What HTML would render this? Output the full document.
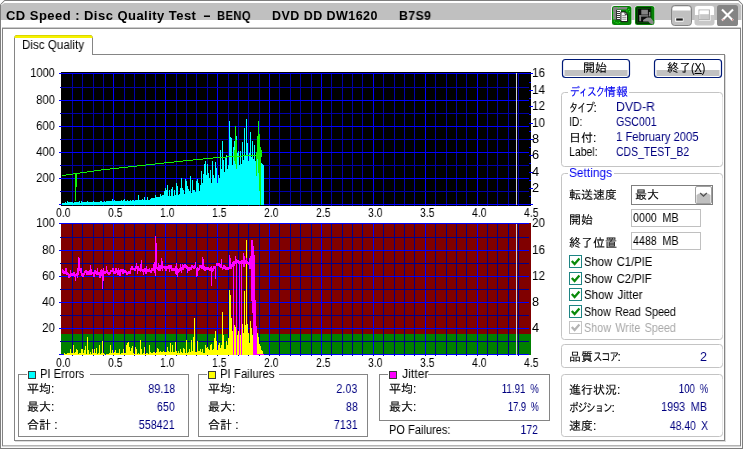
<!DOCTYPE html>
<html lang="ja"><head><meta charset="utf-8"><title>CD Speed : Disc Quality Test</title>
<style>
html,body{margin:0;padding:0;background:#fff;}
body{width:743px;height:449px;overflow:hidden;position:relative;font-family:"Liberation Sans","IPAGothic",sans-serif;color:#000;}
svg{position:absolute;left:0;top:0;}
.t{position:absolute;white-space:pre;line-height:16px;height:16px;will-change:transform;}
.j{position:absolute;white-space:pre;font-size:12px;line-height:14px;height:14px;will-change:transform;-webkit-text-stroke:0.12px;}
.kw{display:inline-block;height:14px;vertical-align:top;}
.ks{display:inline-block;transform-origin:0 0;}
</style></head>
<body>
<svg width="743" height="449" viewBox="0 0 743 449">
<g><path d="M0 449 V4.5 L4.5 0 H738.5 L743 4.5 V449 Z" fill="#7e7e7e"/>
<path d="M1 448 V5 L5 1 H738 L742 5 V448 Z" fill="#fafafa"/>
<path d="M1 20 V5 L5 1 H738 L742 5 V20 Z" fill="#ffffff"/>
<path d="M1 20 V5.2 L4.4 3 H738.4 L741.4 5.4 V20 Z" fill="#c0c0c0"/>
<rect x="1" y="20" width="741" height="8" fill="#ffffff"/>
<rect x="2" y="27" width="739" height="1" fill="#d4d4d4"/>
<rect x="2" y="27.9" width="739" height="418.4" fill="#838383"/>
<rect x="3" y="28.9" width="737" height="416.5" fill="#ffffff"/></g>
<g shape-rendering="crispEdges">
<rect x="14" y="54" width="711" height="387" fill="#858585"/>
<rect x="15" y="55" width="709" height="385" fill="#ffffff"/>
<rect x="725" y="55" width="1" height="387" fill="#dcdcdc"/>
<rect x="15" y="441" width="711" height="1" fill="#dcdcdc"/>
<rect x="61" y="72" width="470" height="134" fill="#000000"/>
<rect x="61" y="223" width="470" height="132" fill="#800000"/>
<rect x="61" y="334" width="470" height="21" fill="#008000"/>
<rect x="72" y="73" width="1" height="132" fill="#0000a8"/>
<rect x="82" y="73" width="1" height="132" fill="#0000a8"/>
<rect x="93" y="73" width="1" height="132" fill="#0000a8"/>
<rect x="103" y="73" width="1" height="132" fill="#0000a8"/>
<rect x="113" y="73" width="1" height="132" fill="#0000ff"/>
<rect x="124" y="73" width="1" height="132" fill="#0000a8"/>
<rect x="134" y="73" width="1" height="132" fill="#0000a8"/>
<rect x="145" y="73" width="1" height="132" fill="#0000a8"/>
<rect x="155" y="73" width="1" height="132" fill="#0000a8"/>
<rect x="165" y="73" width="1" height="132" fill="#0000ff"/>
<rect x="176" y="73" width="1" height="132" fill="#0000a8"/>
<rect x="186" y="73" width="1" height="132" fill="#0000a8"/>
<rect x="196" y="73" width="1" height="132" fill="#0000a8"/>
<rect x="207" y="73" width="1" height="132" fill="#0000a8"/>
<rect x="217" y="73" width="1" height="132" fill="#0000ff"/>
<rect x="228" y="73" width="1" height="132" fill="#0000a8"/>
<rect x="238" y="73" width="1" height="132" fill="#0000a8"/>
<rect x="248" y="73" width="1" height="132" fill="#0000a8"/>
<rect x="259" y="73" width="1" height="132" fill="#0000a8"/>
<rect x="269" y="73" width="1" height="132" fill="#0000ff"/>
<rect x="279" y="73" width="1" height="132" fill="#0000a8"/>
<rect x="290" y="73" width="1" height="132" fill="#0000a8"/>
<rect x="300" y="73" width="1" height="132" fill="#0000a8"/>
<rect x="311" y="73" width="1" height="132" fill="#0000a8"/>
<rect x="321" y="73" width="1" height="132" fill="#0000ff"/>
<rect x="331" y="73" width="1" height="132" fill="#0000a8"/>
<rect x="342" y="73" width="1" height="132" fill="#0000a8"/>
<rect x="352" y="73" width="1" height="132" fill="#0000a8"/>
<rect x="362" y="73" width="1" height="132" fill="#0000a8"/>
<rect x="373" y="73" width="1" height="132" fill="#0000ff"/>
<rect x="383" y="73" width="1" height="132" fill="#0000a8"/>
<rect x="394" y="73" width="1" height="132" fill="#0000a8"/>
<rect x="404" y="73" width="1" height="132" fill="#0000a8"/>
<rect x="414" y="73" width="1" height="132" fill="#0000a8"/>
<rect x="425" y="73" width="1" height="132" fill="#0000ff"/>
<rect x="435" y="73" width="1" height="132" fill="#0000a8"/>
<rect x="446" y="73" width="1" height="132" fill="#0000a8"/>
<rect x="456" y="73" width="1" height="132" fill="#0000a8"/>
<rect x="466" y="73" width="1" height="132" fill="#0000a8"/>
<rect x="477" y="73" width="1" height="132" fill="#0000ff"/>
<rect x="487" y="73" width="1" height="132" fill="#0000a8"/>
<rect x="497" y="73" width="1" height="132" fill="#0000a8"/>
<rect x="508" y="73" width="1" height="132" fill="#0000a8"/>
<rect x="518" y="73" width="1" height="132" fill="#0000a8"/>
<rect x="59" y="73" width="470" height="1" fill="#0000ff"/>
<rect x="60" y="87" width="469" height="1" fill="#0000a8"/>
<rect x="59" y="100" width="470" height="1" fill="#0000ff"/>
<rect x="60" y="113" width="469" height="1" fill="#0000a8"/>
<rect x="59" y="126" width="470" height="1" fill="#0000ff"/>
<rect x="60" y="139" width="469" height="1" fill="#0000a8"/>
<rect x="59" y="152" width="470" height="1" fill="#0000ff"/>
<rect x="60" y="165" width="469" height="1" fill="#0000a8"/>
<rect x="59" y="178" width="470" height="1" fill="#0000ff"/>
<rect x="60" y="191" width="469" height="1" fill="#0000a8"/>
<rect x="59" y="204" width="470" height="1" fill="#0000ff"/>
<path d="M62 205V203h1V203h1V203h1V202h1V203h1V201h1V202h1V202h1V202h1V202h1V202h1V203h1V202h1V202h1V202h1V202h1V202h1V201h1V203h1V201h1V202h1V202h1V202h1V202h1V202h1V201h1V202h1V202h1V202h1V202h1V202h1V201h1V202h1V202h1V202h1V202h1V202h1V202h1V201h1V201h1V202h1V202h1V201h1V202h1V201h1V201h1V201h1V201h1V201h1V201h1V199h1V201h1V200h1V201h1V201h1V201h1V201h1V201h1V201h1V200h1V201h1V200h1V199h1V201h1V201h1V200h1V201h1V201h1V200h1V201h1V200h1V200h1V201h1V200h1V200h1V200h1V195h1V200h1V200h1V200h1V199h1V200h1V197h1V200h1V200h1V197h1V200h1V200h1V199h1V198h1V198h1V198h1V198h1V195h1V197h1V197h1V197h1V197h1V194h1V196h1V195h1V195h1V191h1V188h1V190h1V185h1V196h1V190h1V196h1V189h1V187h1V196h1V190h1V195h1V183h1V186h1V195h1V194h1V188h1V178h1V188h1V190h1V194h1V179h1V181h1V186h1V189h1V191h1V176h1V193h1V180h1V190h1V190h1V192h1V181h1V179h1V183h1V191h1V185h1V171h1V183h1V174h1V164h1V161h1V175h1V164h1V173h1V178h1V170h1V183h1V161h1V175h1V178h1V162h1V168h1V183h1V175h1V178h1V150h1V169h1V141h1V160h1V172h1V157h1V155h1V169h1V165h1V121h1V137h1V138h1V165h1V147h1V141h1V155h1V136h1V153h1V151h1V165h1V151h1V164h1V142h1V160h1V128h1V155h1V119h1V143h1V161h1V153h1V132h1V157h1V141h1V159h1V145h1V161h1V153h1V157h1V149h1V161h1V164h1V163h1V164h1V165h1V205Z" fill="#00ffff"/>
<path d="M62 175h1v1h-1zM63 175h1v1h-1zM64 175h1v1h-1zM65 175h1v1h-1zM66 174h1v1h-1zM67 174h1v1h-1zM68 174h1v1h-1zM69 174h1v1h-1zM70 174h1v1h-1zM71 174h1v1h-1zM72 174h1v1h-1zM73 173h1v1h-1zM74 173h1v1h-1zM75 173h1v1h-1zM76 173h1v1h-1zM77 173h1v1h-1zM78 173h1v1h-1zM79 173h1v1h-1zM80 172h1v1h-1zM81 172h1v1h-1zM82 172h1v1h-1zM83 172h1v1h-1zM84 172h1v1h-1zM85 172h1v1h-1zM86 172h1v1h-1zM87 171h1v1h-1zM88 171h1v1h-1zM89 171h1v1h-1zM90 171h1v1h-1zM91 171h1v1h-1zM92 171h1v1h-1zM93 171h1v1h-1zM94 170h1v1h-1zM95 170h1v1h-1zM96 170h1v1h-1zM97 170h1v1h-1zM98 170h1v1h-1zM99 170h1v1h-1zM100 170h1v1h-1zM101 169h1v1h-1zM102 169h1v1h-1zM103 169h1v1h-1zM104 169h1v1h-1zM105 169h1v1h-1zM106 169h1v1h-1zM107 169h1v1h-1zM108 169h1v1h-1zM109 169h1v1h-1zM110 168h1v1h-1zM111 168h1v1h-1zM112 168h1v1h-1zM113 168h1v1h-1zM114 168h1v1h-1zM115 168h1v1h-1zM116 168h1v1h-1zM117 168h1v1h-1zM118 168h1v1h-1zM119 167h1v1h-1zM120 167h1v1h-1zM121 167h1v1h-1zM122 167h1v1h-1zM123 167h1v1h-1zM124 167h1v1h-1zM125 167h1v1h-1zM126 167h1v1h-1zM127 167h1v1h-1zM128 166h1v1h-1zM129 166h1v1h-1zM130 166h1v1h-1zM131 166h1v1h-1zM132 166h1v1h-1zM133 166h1v1h-1zM134 166h1v1h-1zM135 166h1v1h-1zM136 166h1v1h-1zM137 165h1v1h-1zM138 165h1v1h-1zM139 165h1v1h-1zM140 165h1v1h-1zM141 165h1v1h-1zM142 165h1v1h-1zM143 165h1v1h-1zM144 165h1v1h-1zM145 165h1v1h-1zM146 164h1v1h-1zM147 164h1v1h-1zM148 164h1v1h-1zM149 164h1v1h-1zM150 164h1v1h-1zM151 164h1v1h-1zM152 164h1v1h-1zM153 164h1v1h-1zM154 164h1v1h-1zM155 163h1v1h-1zM156 163h1v1h-1zM157 163h1v1h-1zM158 163h1v1h-1zM159 163h1v1h-1zM160 163h1v1h-1zM161 163h1v1h-1zM162 163h1v1h-1zM163 163h1v1h-1zM164 162h1v1h-1zM165 162h1v1h-1zM166 162h1v1h-1zM167 162h1v1h-1zM168 162h1v1h-1zM169 162h1v1h-1zM170 162h1v1h-1zM171 162h1v1h-1zM172 162h1v1h-1zM173 162h1v1h-1zM174 161h1v1h-1zM175 161h1v1h-1zM176 161h1v1h-1zM177 161h1v1h-1zM178 161h1v1h-1zM179 161h1v1h-1zM180 161h1v1h-1zM181 161h1v1h-1zM182 161h1v1h-1zM183 160h1v1h-1zM184 160h1v1h-1zM185 160h1v1h-1zM186 160h1v1h-1zM187 160h1v1h-1zM188 160h1v1h-1zM189 160h1v1h-1zM190 160h1v1h-1zM191 160h1v1h-1zM192 160h1v1h-1zM193 159h1v1h-1zM194 159h1v1h-1zM195 159h1v1h-1zM196 159h1v1h-1zM197 159h1v1h-1zM198 159h1v1h-1zM199 159h1v1h-1zM200 159h1v1h-1zM201 159h1v1h-1zM202 159h1v1h-1zM203 158h1v1h-1zM204 158h1v1h-1zM205 158h1v1h-1zM206 158h1v1h-1zM207 158h1v1h-1zM208 158h1v1h-1zM209 158h1v1h-1zM210 158h1v1h-1zM211 158h1v1h-1zM212 158h1v1h-1zM213 157h1v1h-1zM214 157h1v1h-1zM215 157h1v1h-1zM216 157h1v1h-1zM217 157h1v1h-1zM218 157h1v1h-1zM219 157h1v1h-1zM220 157h1v1h-1zM221 157h1v1h-1zM222 157h1v1h-1zM223 157h1v1h-1zM224 157h1v1h-1zM225 157h1v1h-1zM226 157h1v1h-1zM227 156h1v1h-1zM228 156h1v1h-1zM229 156h1v1h-1zM230 156h1v1h-1zM231 156h1v1h-1zM232 156h1v1h-1zM233 156h1v1h-1zM234 156h1v1h-1zM235 156h1v1h-1zM236 156h1v1h-1zM237 156h1v1h-1zM238 156h1v1h-1zM239 156h1v1h-1zM240 156h1v1h-1zM241 156h1v1h-1zM242 155h1v1h-1zM243 155h1v1h-1zM244 155h1v1h-1zM245 155h1v1h-1zM246 155h1v1h-1zM247 155h1v1h-1zM248 155h1v1h-1zM249 155h1v1h-1zM250 155h1v1h-1zM251 155h1v1h-1zM252 155h1v1h-1zM253 155h1v1h-1zM254 155h1v1h-1zM255 155h1v1h-1zM256 155h1v1h-1zM257 154h1v1h-1z" fill="#12f40a"/>
<rect x="75" y="173" width="1" height="28" fill="#12f40a"/>
<rect x="76" y="173" width="1" height="14" fill="#12f40a"/>
<rect x="235" y="126" width="1" height="38" fill="#12f40a"/>
<rect x="236" y="140" width="1" height="29" fill="#12f40a"/>
<rect x="234" y="150" width="1" height="11" fill="#12f40a"/>
<rect x="257" y="136" width="1" height="23" fill="#12f40a"/>
<rect x="258" y="121" width="1" height="52" fill="#12f40a"/>
<rect x="259" y="134" width="1" height="57" fill="#12f40a"/>
<rect x="260" y="147" width="1" height="58" fill="#12f40a"/>
<rect x="256" y="152" width="1" height="24" fill="#12f40a"/>
<rect x="261" y="150" width="1" height="7" fill="#12f40a"/>
<rect x="516" y="73" width="1" height="132" fill="#d0d0d0"/>
<rect x="72" y="223" width="1" height="132" fill="#00008c"/>
<rect x="82" y="223" width="1" height="132" fill="#00008c"/>
<rect x="93" y="223" width="1" height="132" fill="#00008c"/>
<rect x="103" y="223" width="1" height="132" fill="#00008c"/>
<rect x="113" y="223" width="1" height="132" fill="#0000ff"/>
<rect x="124" y="223" width="1" height="132" fill="#00008c"/>
<rect x="134" y="223" width="1" height="132" fill="#00008c"/>
<rect x="145" y="223" width="1" height="132" fill="#00008c"/>
<rect x="155" y="223" width="1" height="132" fill="#00008c"/>
<rect x="165" y="223" width="1" height="132" fill="#0000ff"/>
<rect x="176" y="223" width="1" height="132" fill="#00008c"/>
<rect x="186" y="223" width="1" height="132" fill="#00008c"/>
<rect x="196" y="223" width="1" height="132" fill="#00008c"/>
<rect x="207" y="223" width="1" height="132" fill="#00008c"/>
<rect x="217" y="223" width="1" height="132" fill="#0000ff"/>
<rect x="228" y="223" width="1" height="132" fill="#00008c"/>
<rect x="238" y="223" width="1" height="132" fill="#00008c"/>
<rect x="248" y="223" width="1" height="132" fill="#00008c"/>
<rect x="259" y="223" width="1" height="132" fill="#00008c"/>
<rect x="269" y="223" width="1" height="132" fill="#0000ff"/>
<rect x="279" y="223" width="1" height="132" fill="#00008c"/>
<rect x="290" y="223" width="1" height="132" fill="#00008c"/>
<rect x="300" y="223" width="1" height="132" fill="#00008c"/>
<rect x="311" y="223" width="1" height="132" fill="#00008c"/>
<rect x="321" y="223" width="1" height="132" fill="#0000ff"/>
<rect x="331" y="223" width="1" height="132" fill="#00008c"/>
<rect x="342" y="223" width="1" height="132" fill="#00008c"/>
<rect x="352" y="223" width="1" height="132" fill="#00008c"/>
<rect x="362" y="223" width="1" height="132" fill="#00008c"/>
<rect x="373" y="223" width="1" height="132" fill="#0000ff"/>
<rect x="383" y="223" width="1" height="132" fill="#00008c"/>
<rect x="394" y="223" width="1" height="132" fill="#00008c"/>
<rect x="404" y="223" width="1" height="132" fill="#00008c"/>
<rect x="414" y="223" width="1" height="132" fill="#00008c"/>
<rect x="425" y="223" width="1" height="132" fill="#0000ff"/>
<rect x="435" y="223" width="1" height="132" fill="#00008c"/>
<rect x="446" y="223" width="1" height="132" fill="#00008c"/>
<rect x="456" y="223" width="1" height="132" fill="#00008c"/>
<rect x="466" y="223" width="1" height="132" fill="#00008c"/>
<rect x="477" y="223" width="1" height="132" fill="#0000ff"/>
<rect x="487" y="223" width="1" height="132" fill="#00008c"/>
<rect x="497" y="223" width="1" height="132" fill="#00008c"/>
<rect x="508" y="223" width="1" height="132" fill="#00008c"/>
<rect x="518" y="223" width="1" height="132" fill="#00008c"/>
<rect x="59" y="223" width="470" height="1" fill="#0000ff"/>
<rect x="60" y="237" width="469" height="1" fill="#00008c"/>
<rect x="59" y="250" width="470" height="1" fill="#0000ff"/>
<rect x="60" y="263" width="469" height="1" fill="#00008c"/>
<rect x="59" y="276" width="470" height="1" fill="#0000ff"/>
<rect x="60" y="289" width="469" height="1" fill="#00008c"/>
<rect x="59" y="302" width="470" height="1" fill="#0000ff"/>
<rect x="60" y="315" width="469" height="1" fill="#00008c"/>
<rect x="59" y="328" width="470" height="1" fill="#0000ff"/>
<rect x="60" y="341" width="469" height="1" fill="#00008c"/>
<rect x="59" y="354" width="470" height="1" fill="#0000ff"/>
<path d="M64 355V353h1V354h1V354h1V353h1V353h1V353h1V349h1V353h1V353h1V345h1V353h1V352h1V349h1V350h1V354h1V353h1V353h1V349h1V349h1V353h1V350h1V346h1V354h1V337h1V350h1V354h1V352h1V354h1V349h1V353h1V349h1V353h1V348h1V354h1V353h1V345h1V354h1V353h1V341h1V353h1V354h1V355h1V354h1V354h1V354h1V353h1V345h1V353h1V350h1V353h1V352h1V350h1V353h1V353h1V353h1V349h1V354h1V353h1V353h1V349h1V353h1V353h1V345h1V343h1V342h1V347h1V351h1V348h1V346h1V353h1V354h1V347h1V349h1V354h1V353h1V354h1V340h1V349h1V354h1V353h1V347h1V354h1V353h1V353h1V354h1V345h1V352h1V353h1V353h1V352h1V352h1V353h1V352h1V348h1V349h1V352h1V351h1V352h1V352h1V351h1V352h1V352h1V352h1V347h1V351h1V352h1V343h1V352h1V345h1V352h1V352h1V342h1V351h1V353h1V351h1V353h1V349h1V352h1V353h1V348h1V349h1V353h1V340h1V353h1V352h1V349h1V352h1V340h1V351h1V337h1V318h1V352h1V352h1V341h1V351h1V351h1V349h1V352h1V349h1V353h1V353h1V345h1V348h1V347h1V349h1V350h1V345h1V344h1V350h1V349h1V338h1V331h1V341h1V350h1V345h1V343h1V348h1V345h1V312h1V335h1V349h1V349h1V341h1V345h1V338h1V290h1V295h1V318h1V331h1V345h1V325h1V327h1V339h1V335h1V331h1V341h1V335h1V344h1V324h1V333h1V291h1V325h1V240h1V324h1V333h1V343h1V321h1V328h1V335h1V341h1V344h1V340h1V336h1V333h1V337h1V344h1V346h1V350h1V351h1V354h1V355Z" fill="#ffff00"/>
<path d="M62 269h1v4h-1zM63 270h1v4h-1zM64 271h1v3h-1zM65 268h1v6h-1zM66 268h1v7h-1zM67 272h1v3h-1zM68 273h1v5h-1zM69 274h1v4h-1zM70 270h1v7h-1zM71 273h1v3h-1zM72 273h1v3h-1zM73 272h1v4h-1zM74 272h1v5h-1zM75 274h1v7h-1zM76 273h1v3h-1zM77 268h1v10h-1zM78 257h1v18h-1zM79 258h1v13h-1zM80 268h1v5h-1zM81 268h1v8h-1zM82 273h1v4h-1zM83 273h1v4h-1zM84 271h1v4h-1zM85 270h1v3h-1zM86 270h1v5h-1zM87 271h1v4h-1zM88 271h1v4h-1zM89 270h1v5h-1zM90 265h1v10h-1zM91 269h1v6h-1zM92 272h1v2h-1zM93 272h1v5h-1zM94 270h1v7h-1zM95 270h1v4h-1zM96 271h1v4h-1zM97 268h1v7h-1zM98 272h1v3h-1zM99 272h1v6h-1zM100 270h1v8h-1zM101 269h1v7h-1zM102 270h1v19h-1zM103 268h1v13h-1zM104 271h1v3h-1zM105 271h1v3h-1zM106 266h1v7h-1zM107 270h1v4h-1zM108 272h1v3h-1zM109 272h1v3h-1zM110 270h1v4h-1zM111 270h1v2h-1zM112 268h1v4h-1zM113 268h1v6h-1zM114 271h1v3h-1zM115 268h1v6h-1zM116 268h1v5h-1zM117 270h1v5h-1zM118 268h1v7h-1zM119 270h1v6h-1zM120 269h1v7h-1zM121 269h1v3h-1zM122 269h1v5h-1zM123 269h1v5h-1zM124 270h1v3h-1zM125 270h1v3h-1zM126 271h1v4h-1zM127 272h1v3h-1zM128 271h1v3h-1zM129 271h1v3h-1zM130 268h1v6h-1zM131 266h1v4h-1zM132 266h1v4h-1zM133 268h1v2h-1zM134 268h1v3h-1zM135 266h1v5h-1zM136 263h1v6h-1zM137 266h1v8h-1zM138 266h1v5h-1zM139 268h1v3h-1zM140 264h1v8h-1zM141 260h1v11h-1zM142 269h1v3h-1zM143 269h1v6h-1zM144 268h1v4h-1zM145 268h1v6h-1zM146 266h1v8h-1zM147 269h1v3h-1zM148 269h1v3h-1zM149 268h1v4h-1zM150 270h1v3h-1zM151 268h1v5h-1zM152 268h1v3h-1zM153 264h1v7h-1zM154 262h1v11h-1zM155 236h1v40h-1zM156 243h1v26h-1zM157 267h1v3h-1zM158 263h1v8h-1zM159 265h1v6h-1zM160 265h1v6h-1zM161 258h1v11h-1zM162 261h1v10h-1zM163 266h1v2h-1zM164 266h1v3h-1zM165 266h1v5h-1zM166 266h1v5h-1zM167 266h1v3h-1zM168 265h1v4h-1zM169 265h1v7h-1zM170 265h1v4h-1zM171 265h1v6h-1zM172 268h1v3h-1zM173 268h1v3h-1zM174 268h1v3h-1zM175 266h1v8h-1zM176 263h1v12h-1zM177 268h1v9h-1zM178 269h1v4h-1zM179 268h1v4h-1zM180 264h1v7h-1zM181 267h1v6h-1zM182 264h1v6h-1zM183 265h1v5h-1zM184 264h1v4h-1zM185 264h1v4h-1zM186 265h1v4h-1zM187 266h1v7h-1zM188 267h1v4h-1zM189 267h1v4h-1zM190 267h1v3h-1zM191 265h1v5h-1zM192 265h1v3h-1zM193 266h1v3h-1zM194 265h1v4h-1zM195 262h1v6h-1zM196 268h1v9h-1zM197 267h1v9h-1zM198 268h1v3h-1zM199 265h1v5h-1zM200 265h1v3h-1zM201 265h1v4h-1zM202 257h1v12h-1zM203 259h1v11h-1zM204 266h1v5h-1zM205 267h1v4h-1zM206 267h1v3h-1zM207 267h1v3h-1zM208 267h1v3h-1zM209 268h1v3h-1zM210 267h1v4h-1zM211 266h1v20h-1zM212 268h1v4h-1zM213 266h1v5h-1zM214 266h1v3h-1zM215 266h1v13h-1zM216 263h1v3h-1zM217 263h1v3h-1zM218 263h1v3h-1zM219 263h1v4h-1zM220 264h1v4h-1zM221 259h1v9h-1zM222 267h1v3h-1zM223 265h1v4h-1zM224 265h1v4h-1zM225 266h1v4h-1zM226 267h1v3h-1zM227 267h1v3h-1zM228 267h1v3h-1zM229 255h1v14h-1zM230 258h1v11h-1zM231 264h1v5h-1zM232 262h1v5h-1zM233 261h1v4h-1zM234 261h1v5h-1zM235 256h1v8h-1zM236 259h1v3h-1zM237 260h1v3h-1zM238 260h1v4h-1zM239 261h1v3h-1zM240 261h1v3h-1zM241 260h1v4h-1zM242 260h1v4h-1zM243 253h1v14h-1zM244 256h1v11h-1zM245 260h1v4h-1zM246 258h1v6h-1zM247 261h1v3h-1zM248 262h1v3h-1zM249 261h1v4h-1zM250 261h1v3h-1z" fill="#ff00ff"/>
<rect x="233" y="262" width="1" height="93" fill="#ff00ff"/>
<rect x="236" y="262" width="1" height="93" fill="#ff00ff"/>
<rect x="239" y="262" width="1" height="93" fill="#ff00ff"/>
<rect x="241" y="262" width="1" height="93" fill="#ff00ff"/>
<rect x="249" y="258" width="1" height="11" fill="#ff00ff"/>
<rect x="250" y="256" width="1" height="13" fill="#ff00ff"/>
<rect x="251" y="240" width="1" height="61" fill="#ff00ff"/>
<rect x="252" y="240" width="1" height="73" fill="#ff00ff"/>
<rect x="253" y="246" width="1" height="109" fill="#ff00ff"/>
<rect x="254" y="255" width="1" height="100" fill="#ff00ff"/>
<rect x="255" y="300" width="1" height="55" fill="#ff00ff"/>
<rect x="256" y="326" width="1" height="29" fill="#ff00ff"/>
<rect x="256" y="354" width="8" height="1" fill="#ff00ff"/>
<rect x="516" y="224" width="1" height="131" fill="#d0d0d0"/>
<rect x="529" y="73" width="4" height="1" fill="#0000ff"/>
<rect x="529" y="82" width="2" height="1" fill="#0000ff"/>
<rect x="529" y="90" width="4" height="1" fill="#0000ff"/>
<rect x="529" y="98" width="2" height="1" fill="#0000ff"/>
<rect x="529" y="106" width="4" height="1" fill="#0000ff"/>
<rect x="529" y="114" width="2" height="1" fill="#0000ff"/>
<rect x="529" y="123" width="4" height="1" fill="#0000ff"/>
<rect x="529" y="131" width="2" height="1" fill="#0000ff"/>
<rect x="529" y="139" width="4" height="1" fill="#0000ff"/>
<rect x="529" y="147" width="2" height="1" fill="#0000ff"/>
<rect x="529" y="155" width="4" height="1" fill="#0000ff"/>
<rect x="529" y="163" width="2" height="1" fill="#0000ff"/>
<rect x="529" y="172" width="4" height="1" fill="#0000ff"/>
<rect x="529" y="180" width="2" height="1" fill="#0000ff"/>
<rect x="529" y="188" width="4" height="1" fill="#0000ff"/>
<rect x="529" y="196" width="2" height="1" fill="#0000ff"/>
<rect x="529" y="204" width="4" height="1" fill="#0000ff"/>
<rect x="72" y="205" width="1" height="1" fill="#0000a8"/>
<rect x="72" y="355" width="1" height="1" fill="#0000a8"/>
<rect x="82" y="205" width="1" height="1" fill="#0000a8"/>
<rect x="82" y="355" width="1" height="1" fill="#0000a8"/>
<rect x="93" y="205" width="1" height="1" fill="#0000a8"/>
<rect x="93" y="355" width="1" height="1" fill="#0000a8"/>
<rect x="103" y="205" width="1" height="1" fill="#0000a8"/>
<rect x="103" y="355" width="1" height="1" fill="#0000a8"/>
<rect x="113" y="205" width="1" height="1" fill="#0000a8"/>
<rect x="113" y="355" width="1" height="1" fill="#0000a8"/>
<rect x="124" y="205" width="1" height="1" fill="#0000a8"/>
<rect x="124" y="355" width="1" height="1" fill="#0000a8"/>
<rect x="134" y="205" width="1" height="1" fill="#0000a8"/>
<rect x="134" y="355" width="1" height="1" fill="#0000a8"/>
<rect x="145" y="205" width="1" height="1" fill="#0000a8"/>
<rect x="145" y="355" width="1" height="1" fill="#0000a8"/>
<rect x="155" y="205" width="1" height="1" fill="#0000a8"/>
<rect x="155" y="355" width="1" height="1" fill="#0000a8"/>
<rect x="165" y="205" width="1" height="1" fill="#0000a8"/>
<rect x="165" y="355" width="1" height="1" fill="#0000a8"/>
<rect x="176" y="205" width="1" height="1" fill="#0000a8"/>
<rect x="176" y="355" width="1" height="1" fill="#0000a8"/>
<rect x="186" y="205" width="1" height="1" fill="#0000a8"/>
<rect x="186" y="355" width="1" height="1" fill="#0000a8"/>
<rect x="196" y="205" width="1" height="1" fill="#0000a8"/>
<rect x="196" y="355" width="1" height="1" fill="#0000a8"/>
<rect x="207" y="205" width="1" height="1" fill="#0000a8"/>
<rect x="207" y="355" width="1" height="1" fill="#0000a8"/>
<rect x="217" y="205" width="1" height="1" fill="#0000a8"/>
<rect x="217" y="355" width="1" height="1" fill="#0000a8"/>
<rect x="228" y="205" width="1" height="1" fill="#0000a8"/>
<rect x="228" y="355" width="1" height="1" fill="#0000a8"/>
<rect x="238" y="205" width="1" height="1" fill="#0000a8"/>
<rect x="238" y="355" width="1" height="1" fill="#0000a8"/>
<rect x="248" y="205" width="1" height="1" fill="#0000a8"/>
<rect x="248" y="355" width="1" height="1" fill="#0000a8"/>
<rect x="259" y="205" width="1" height="1" fill="#0000a8"/>
<rect x="259" y="355" width="1" height="1" fill="#0000a8"/>
<rect x="269" y="205" width="1" height="1" fill="#0000a8"/>
<rect x="269" y="355" width="1" height="1" fill="#0000a8"/>
<rect x="279" y="205" width="1" height="1" fill="#0000a8"/>
<rect x="279" y="355" width="1" height="1" fill="#0000a8"/>
<rect x="290" y="205" width="1" height="1" fill="#0000a8"/>
<rect x="290" y="355" width="1" height="1" fill="#0000a8"/>
<rect x="300" y="205" width="1" height="1" fill="#0000a8"/>
<rect x="300" y="355" width="1" height="1" fill="#0000a8"/>
<rect x="311" y="205" width="1" height="1" fill="#0000a8"/>
<rect x="311" y="355" width="1" height="1" fill="#0000a8"/>
<rect x="321" y="205" width="1" height="1" fill="#0000a8"/>
<rect x="321" y="355" width="1" height="1" fill="#0000a8"/>
<rect x="331" y="205" width="1" height="1" fill="#0000a8"/>
<rect x="331" y="355" width="1" height="1" fill="#0000a8"/>
<rect x="342" y="205" width="1" height="1" fill="#0000a8"/>
<rect x="342" y="355" width="1" height="1" fill="#0000a8"/>
<rect x="352" y="205" width="1" height="1" fill="#0000a8"/>
<rect x="352" y="355" width="1" height="1" fill="#0000a8"/>
<rect x="362" y="205" width="1" height="1" fill="#0000a8"/>
<rect x="362" y="355" width="1" height="1" fill="#0000a8"/>
<rect x="373" y="205" width="1" height="1" fill="#0000a8"/>
<rect x="373" y="355" width="1" height="1" fill="#0000a8"/>
<rect x="383" y="205" width="1" height="1" fill="#0000a8"/>
<rect x="383" y="355" width="1" height="1" fill="#0000a8"/>
<rect x="394" y="205" width="1" height="1" fill="#0000a8"/>
<rect x="394" y="355" width="1" height="1" fill="#0000a8"/>
<rect x="404" y="205" width="1" height="1" fill="#0000a8"/>
<rect x="404" y="355" width="1" height="1" fill="#0000a8"/>
<rect x="414" y="205" width="1" height="1" fill="#0000a8"/>
<rect x="414" y="355" width="1" height="1" fill="#0000a8"/>
<rect x="425" y="205" width="1" height="1" fill="#0000a8"/>
<rect x="425" y="355" width="1" height="1" fill="#0000a8"/>
<rect x="435" y="205" width="1" height="1" fill="#0000a8"/>
<rect x="435" y="355" width="1" height="1" fill="#0000a8"/>
<rect x="446" y="205" width="1" height="1" fill="#0000a8"/>
<rect x="446" y="355" width="1" height="1" fill="#0000a8"/>
<rect x="456" y="205" width="1" height="1" fill="#0000a8"/>
<rect x="456" y="355" width="1" height="1" fill="#0000a8"/>
<rect x="466" y="205" width="1" height="1" fill="#0000a8"/>
<rect x="466" y="355" width="1" height="1" fill="#0000a8"/>
<rect x="477" y="205" width="1" height="1" fill="#0000a8"/>
<rect x="477" y="355" width="1" height="1" fill="#0000a8"/>
<rect x="487" y="205" width="1" height="1" fill="#0000a8"/>
<rect x="487" y="355" width="1" height="1" fill="#0000a8"/>
<rect x="497" y="205" width="1" height="1" fill="#0000a8"/>
<rect x="497" y="355" width="1" height="1" fill="#0000a8"/>
<rect x="508" y="205" width="1" height="1" fill="#0000a8"/>
<rect x="508" y="355" width="1" height="1" fill="#0000a8"/>
<rect x="518" y="205" width="1" height="1" fill="#0000a8"/>
<rect x="518" y="355" width="1" height="1" fill="#0000a8"/>
<rect x="18" y="374" width="1" height="63" fill="#858585"/>
<rect x="188" y="374" width="1" height="63" fill="#858585"/>
<rect x="18" y="436" width="171" height="1" fill="#858585"/>
<rect x="18" y="374" width="9" height="1" fill="#858585"/>
<rect x="90" y="374" width="99" height="1" fill="#858585"/>
<rect x="198" y="374" width="1" height="63" fill="#858585"/>
<rect x="367" y="374" width="1" height="63" fill="#858585"/>
<rect x="198" y="436" width="170" height="1" fill="#858585"/>
<rect x="198" y="374" width="9" height="1" fill="#858585"/>
<rect x="279" y="374" width="89" height="1" fill="#858585"/>
<rect x="379" y="374" width="1" height="47" fill="#858585"/>
<rect x="549" y="374" width="1" height="47" fill="#858585"/>
<rect x="379" y="420" width="171" height="1" fill="#858585"/>
<rect x="379" y="374" width="9" height="1" fill="#858585"/>
<rect x="428" y="374" width="122" height="1" fill="#858585"/>
<rect x="28" y="371" width="8" height="8" fill="#3a3a3a"/>
<rect x="29" y="372" width="6" height="6" fill="#00ffff"/>
<rect x="208" y="371" width="8" height="8" fill="#3a3a3a"/>
<rect x="209" y="372" width="6" height="6" fill="#ffff00"/>
<rect x="389" y="371" width="8" height="8" fill="#3a3a3a"/>
<rect x="390" y="372" width="6" height="6" fill="#ff00ff"/>
<rect x="631" y="185" width="82" height="20" fill="#7f7f7f"/>
<rect x="632" y="186" width="80" height="18" fill="#ffffff"/>
<rect x="631" y="209" width="70" height="18" fill="#c0c0c0"/>
<rect x="632" y="210" width="68" height="16" fill="#ffffff"/>
<rect x="631" y="232" width="70" height="18" fill="#c0c0c0"/>
<rect x="632" y="233" width="68" height="16" fill="#ffffff"/>
<rect x="569" y="255" width="13" height="13" fill="#1e8484"/>
<rect x="570" y="256" width="11" height="11" fill="#ffffff"/>
<rect x="569" y="272" width="13" height="13" fill="#1e8484"/>
<rect x="570" y="273" width="11" height="11" fill="#ffffff"/>
<rect x="569" y="288" width="13" height="13" fill="#1e8484"/>
<rect x="570" y="289" width="11" height="11" fill="#ffffff"/>
<rect x="569" y="305" width="13" height="13" fill="#1e8484"/>
<rect x="570" y="306" width="11" height="11" fill="#ffffff"/>
<rect x="569" y="321" width="13" height="13" fill="#c4c4c4"/>
<rect x="570" y="322" width="11" height="11" fill="#ffffff"/>
</g>
<g><path d="M14 55 V37 L16 35 H91 L93 37 V55 Z" fill="#858585"/>
<path d="M15 56 V37.4 L16.4 36 H90.6 L92 37.4 V54 Z" fill="#ffffff"/>
<path d="M14.4 38.1 V36.8 L16.2 35 H90.8 L92.6 36.8 V38.1 Z" fill="#f6f200"/>
<path d="M15.2 35.8 L16.2 34.9 H90.8 L91.8 35.8 Z" fill="#d2cc00"/>
<rect x="15" y="54" width="77" height="2" fill="#ffffff"/>
<path d="M629 92.5 H719.5 Q722.5 92.5 722.5 95.5 V163.5 Q722.5 166.5 719.5 166.5 H564.5 Q561.5 166.5 561.5 163.5 V95.5 Q561.5 92.5 564.5 92.5 H568" fill="none" stroke="#c4c4c4" stroke-width="1"/>
<path d="M722.5 96.5 V162.5" fill="none" stroke="#ffffff" stroke-width="1.2" opacity="0.55"/>
<path d="M614 173.5 H719.5 Q722.5 173.5 722.5 176.5 V336.5 Q722.5 339.5 719.5 339.5 H564.5 Q561.5 339.5 561.5 336.5 V176.5 Q561.5 173.5 564.5 173.5 H568" fill="none" stroke="#c4c4c4" stroke-width="1"/>
<path d="M722.5 177.5 V335.5" fill="none" stroke="#ffffff" stroke-width="1.2" opacity="0.55"/>
<path d="M564.5 344.5 H719.5 Q722.5 344.5 722.5 347.5 V364.5 Q722.5 367.5 719.5 367.5 H564.5 Q561.5 367.5 561.5 364.5 V347.5 Q561.5 344.5 564.5 344.5 Z" fill="none" stroke="#c4c4c4" stroke-width="1"/>
<path d="M722.5 348.5 V363.5" fill="none" stroke="#ffffff" stroke-width="1.2" opacity="0.55"/>
<path d="M564.5 374.5 H719.5 Q722.5 374.5 722.5 377.5 V433.5 Q722.5 436.5 719.5 436.5 H564.5 Q561.5 436.5 561.5 433.5 V377.5 Q561.5 374.5 564.5 374.5 Z" fill="none" stroke="#c4c4c4" stroke-width="1"/>
<path d="M722.5 378.5 V432.5" fill="none" stroke="#ffffff" stroke-width="1.2" opacity="0.55"/>
<rect x="562.5" y="59.5" width="67" height="18" rx="3" fill="#ffffff" stroke="#001a78" stroke-width="1.2"/>
<rect x="564.5" y="70" width="63" height="6" fill="#c2c2c2"/>
<rect x="654.5" y="59.5" width="67" height="18" rx="3" fill="#ffffff" stroke="#001a78" stroke-width="1.2"/>
<rect x="656.5" y="70" width="63" height="6" fill="#c2c2c2"/>
<rect x="695.5" y="186.5" width="16" height="17" rx="1.5" fill="#ffffff" stroke="#a0a0a0" stroke-width="1"/>
<path d="M696.5 203 V195 L699 193.5 H708 L710.5 195 V203 Z" fill="#c0c0c0"/>
<path d="M700.2 193 L703.5 196.2 L706.8 193" fill="none" stroke="#505050" stroke-width="1.25"/>
<path d="M571.8 261 L574.6 264 L579.4 258.6" fill="none" stroke="#0a8a0a" stroke-width="2.3"/>
<path d="M571.8 278 L574.6 281 L579.4 275.6" fill="none" stroke="#0a8a0a" stroke-width="2.3"/>
<path d="M571.8 294 L574.6 297 L579.4 291.6" fill="none" stroke="#0a8a0a" stroke-width="2.3"/>
<path d="M571.8 311 L574.6 314 L579.4 308.6" fill="none" stroke="#0a8a0a" stroke-width="2.3"/>
<path d="M571.8 327 L574.6 330 L579.4 324.6" fill="none" stroke="#b4b4b4" stroke-width="2.3"/></g>
<g><rect x="611" y="5" width="20.6" height="20.4" rx="3" fill="#ffffff" opacity="0.85"/>
<rect x="612" y="6" width="19.4" height="19" rx="2.5" fill="#078307"/>
<path d="M613 19.6 V8.4 Q613 7 614.4 7 H627.6 L626.6 9.6 H616.4 V19.6 Z" fill="#848484"/>
<g shape-rendering="crispEdges"><rect x="616" y="10" width="5" height="10" fill="#f8f8f8"/><rect x="616" y="10" width="1" height="10" fill="#303030"/><rect x="617" y="11" width="3" height="1" fill="#383838"/><rect x="617" y="13" width="3" height="1" fill="#383838"/><rect x="617" y="15" width="3" height="1" fill="#383838"/><rect x="617" y="17" width="3" height="1" fill="#383838"/><rect x="617" y="19" width="3" height="1" fill="#383838"/></g>
<path d="M620.9 11.9 H625.2 L627.6 14.2 V21.6 H620.9 Z" fill="#fafafa" stroke="#101010" stroke-width="1"/>
<path d="M625 12 V14.4 H627.4" fill="none" stroke="#101010" stroke-width="0.8"/>
<path d="M622.2 15.6 H626.4 M622.2 17.4 H626.4 M622.2 19.2 H626.4" stroke="#8a8a8a" stroke-width="0.9"/>
<rect x="613.2" y="16.8" width="1" height="1" fill="#22ff22"/>
<rect x="613.8" y="20.6" width="1" height="1" fill="#22ff22"/>
<rect x="615.6" y="22.2" width="1" height="1" fill="#22ff22"/>
<rect x="617.4" y="22.6" width="1" height="1" fill="#22ff22"/>
<rect x="619.2" y="22" width="1" height="1" fill="#22ff22"/>
<rect x="628.2" y="9" width="1" height="1" fill="#22ff22"/>
<rect x="626.4" y="10.4" width="1" height="1" fill="#22ff22"/>
<rect x="629" y="11.2" width="1" height="1" fill="#22ff22"/>
<rect x="613" y="12.4" width="1" height="1" fill="#22ff22"/>
<rect x="618" y="7.2" width="1" height="1" fill="#22ff22"/>
<rect x="634.5" y="5.5" width="20.4" height="20" rx="3" fill="#ffffff" opacity="0.8"/>
<rect x="635" y="6" width="19.4" height="19" rx="2.5" fill="#078307"/>
<rect x="636.4" y="7.4" width="14.8" height="16.2" fill="#000000"/>
<rect x="637.4" y="8.6" width="12.8" height="13.8" fill="#0a0a0a" stroke="#065c06" stroke-width="0.8"/>
<rect x="641.3" y="9.7" width="6.6" height="4.9" fill="#858585"/>
<rect x="639.3" y="15.2" width="1.8" height="6" fill="#858585"/>
<rect x="639.3" y="15.2" width="9" height="1.4" fill="#858585"/>
<rect x="648.9" y="12" width="1.4" height="4.4" fill="#858585"/>
<path d="M643 20 L647 17.6 L650.5 17.6 L653.6 21.4 L653.4 24.4 L650 23.6 L648.4 21.6 L643.2 21.4 Z" fill="#8c8c8c"/>
<rect x="671.5" y="5.5" width="20" height="20" rx="3.2" fill="#c0c0c0" stroke="#858585" stroke-width="1"/>
<path d="M672.6 10.4 V8.4 Q672.6 6.6 674.6 6.6 H688.4 Q690.4 6.6 690.4 8.4 V10.4 Z" fill="#ffffff"/>
<rect x="675.2" y="17.8" width="8.2" height="3.9" fill="#ffffff"/>
<rect x="676.2" y="18.4" width="6.6" height="2.2" fill="#1c1c1c"/>
<rect x="694.5" y="5.5" width="20" height="20" rx="3.2" fill="#c8c8c8"/>
<path d="M695 15 V8.4 Q695 6 697.6 6 H711.4 Q714 6 714 8.4 V15 Z" fill="#ffffff"/>
<rect x="699.6" y="10.6" width="10.4" height="9.6" fill="#c8c8c8" stroke="#ffffff" stroke-width="1"/>
<rect x="699" y="10" width="10.4" height="9.6" fill="none" stroke="#b0b0b0" stroke-width="1"/>
<rect x="699.6" y="10.6" width="9.2" height="3.6" fill="#ffffff"/>
<rect x="717" y="5" width="21" height="21" rx="2.6" fill="#848484"/>
<path d="M722 9.6 L733 20.6 M733 9.6 L722 20.6" stroke="#ffffff" stroke-width="2.1" fill="none"/>
<rect x="722.6" y="19.4" width="1" height="1" fill="#c03030"/><rect x="732" y="19.4" width="1" height="1" fill="#c03030"/></g>
</svg>
<div class="t" style="top:7.87px;font-size:12.5px;color:#000;font-weight:bold;letter-spacing:0.45px;left:6.4px;transform-origin:0 0;transform:scaleX(1.039);">CD Speed : Disc Quality Test</div>
<div class="t" style="top:7.87px;font-size:12.5px;color:#000;font-weight:bold;left:202.7px;transform-origin:0 0;transform:scaleX(1.918);">-</div>
<div class="t" style="top:7.87px;font-size:12.5px;color:#000;font-weight:bold;letter-spacing:0.45px;left:216.5px;transform-origin:0 0;transform:scaleX(0.897);">BENQ</div>
<div class="t" style="top:7.87px;font-size:12.5px;color:#000;font-weight:bold;letter-spacing:0.45px;left:272.1px;transform-origin:0 0;transform:scaleX(0.998);">DVD DD DW1620</div>
<div class="t" style="top:7.87px;font-size:12.5px;color:#000;font-weight:bold;letter-spacing:0.45px;left:399.4px;transform-origin:0 0;transform:scaleX(0.976);">B7S9</div>
<div class="t" style="top:36.87px;font-size:12.5px;color:#000;left:22.4px;transform-origin:0 0;transform:scaleX(0.930);">Disc Quality</div>
<div class="t" style="top:64.87px;font-size:12.5px;color:#000;right:688.1px;transform-origin:100% 0;transform:scaleX(0.884);">1000</div>
<div class="t" style="top:91.87px;font-size:12.5px;color:#000;right:688.1px;transform-origin:100% 0;transform:scaleX(0.896);">800</div>
<div class="t" style="top:117.87px;font-size:12.5px;color:#000;right:688.1px;transform-origin:100% 0;transform:scaleX(0.896);">600</div>
<div class="t" style="top:143.87px;font-size:12.5px;color:#000;right:688.1px;transform-origin:100% 0;transform:scaleX(0.896);">400</div>
<div class="t" style="top:169.87px;font-size:12.5px;color:#000;right:688.1px;transform-origin:100% 0;transform:scaleX(0.896);">200</div>
<div class="t" style="top:214.87px;font-size:12.5px;color:#000;right:688.1px;transform-origin:100% 0;transform:scaleX(0.896);">100</div>
<div class="t" style="top:241.87px;font-size:12.5px;color:#000;right:688.1px;transform-origin:100% 0;transform:scaleX(0.920);">80</div>
<div class="t" style="top:267.87px;font-size:12.5px;color:#000;right:688.1px;transform-origin:100% 0;transform:scaleX(0.920);">60</div>
<div class="t" style="top:293.87px;font-size:12.5px;color:#000;right:688.1px;transform-origin:100% 0;transform:scaleX(0.920);">40</div>
<div class="t" style="top:319.87px;font-size:12.5px;color:#000;right:688.1px;transform-origin:100% 0;transform:scaleX(0.920);">20</div>
<div class="t" style="top:64.87px;font-size:12.5px;color:#000;left:532.1px;transform-origin:0 0;transform:scaleX(0.935);">16</div>
<div class="t" style="top:81.87px;font-size:12.5px;color:#000;left:532.1px;transform-origin:0 0;transform:scaleX(0.935);">14</div>
<div class="t" style="top:97.87px;font-size:12.5px;color:#000;left:532.1px;transform-origin:0 0;transform:scaleX(0.935);">12</div>
<div class="t" style="top:114.87px;font-size:12.5px;color:#000;left:532.1px;transform-origin:0 0;transform:scaleX(0.935);">10</div>
<div class="t" style="top:130.87px;font-size:12.5px;color:#000;left:532.1px;transform-origin:0 0;transform:scaleX(1.021);">8</div>
<div class="t" style="top:146.87px;font-size:12.5px;color:#000;left:532.1px;transform-origin:0 0;transform:scaleX(1.021);">6</div>
<div class="t" style="top:163.87px;font-size:12.5px;color:#000;left:532.1px;transform-origin:0 0;transform:scaleX(1.021);">4</div>
<div class="t" style="top:179.87px;font-size:12.5px;color:#000;left:532.1px;transform-origin:0 0;transform:scaleX(1.021);">2</div>
<div class="t" style="top:214.87px;font-size:12.5px;color:#000;left:532.1px;transform-origin:0 0;transform:scaleX(0.935);">20</div>
<div class="t" style="top:241.87px;font-size:12.5px;color:#000;left:532.1px;transform-origin:0 0;transform:scaleX(0.935);">16</div>
<div class="t" style="top:267.87px;font-size:12.5px;color:#000;left:532.1px;transform-origin:0 0;transform:scaleX(0.935);">12</div>
<div class="t" style="top:293.87px;font-size:12.5px;color:#000;left:532.1px;transform-origin:0 0;transform:scaleX(1.021);">8</div>
<div class="t" style="top:319.87px;font-size:12.5px;color:#000;left:532.1px;transform-origin:0 0;transform:scaleX(1.021);">4</div>
<div class="t" style="top:204.87px;font-size:12.5px;color:#000;left:56.25px;transform-origin:0 0;transform:scaleX(0.834);">0.0</div>
<div class="t" style="top:354.87px;font-size:12.5px;color:#000;left:56.25px;transform-origin:0 0;transform:scaleX(0.834);">0.0</div>
<div class="t" style="top:204.87px;font-size:12.5px;color:#000;left:107.75px;transform-origin:0 0;transform:scaleX(0.834);">0.5</div>
<div class="t" style="top:354.87px;font-size:12.5px;color:#000;left:107.75px;transform-origin:0 0;transform:scaleX(0.834);">0.5</div>
<div class="t" style="top:204.87px;font-size:12.5px;color:#000;left:159.75px;transform-origin:0 0;transform:scaleX(0.834);">1.0</div>
<div class="t" style="top:354.87px;font-size:12.5px;color:#000;left:159.75px;transform-origin:0 0;transform:scaleX(0.834);">1.0</div>
<div class="t" style="top:204.87px;font-size:12.5px;color:#000;left:211.75px;transform-origin:0 0;transform:scaleX(0.834);">1.5</div>
<div class="t" style="top:354.87px;font-size:12.5px;color:#000;left:211.75px;transform-origin:0 0;transform:scaleX(0.834);">1.5</div>
<div class="t" style="top:204.87px;font-size:12.5px;color:#000;left:263.75px;transform-origin:0 0;transform:scaleX(0.834);">2.0</div>
<div class="t" style="top:354.87px;font-size:12.5px;color:#000;left:263.75px;transform-origin:0 0;transform:scaleX(0.834);">2.0</div>
<div class="t" style="top:204.87px;font-size:12.5px;color:#000;left:315.75px;transform-origin:0 0;transform:scaleX(0.834);">2.5</div>
<div class="t" style="top:354.87px;font-size:12.5px;color:#000;left:315.75px;transform-origin:0 0;transform:scaleX(0.834);">2.5</div>
<div class="t" style="top:204.87px;font-size:12.5px;color:#000;left:367.75px;transform-origin:0 0;transform:scaleX(0.834);">3.0</div>
<div class="t" style="top:354.87px;font-size:12.5px;color:#000;left:367.75px;transform-origin:0 0;transform:scaleX(0.834);">3.0</div>
<div class="t" style="top:204.87px;font-size:12.5px;color:#000;left:419.75px;transform-origin:0 0;transform:scaleX(0.834);">3.5</div>
<div class="t" style="top:354.87px;font-size:12.5px;color:#000;left:419.75px;transform-origin:0 0;transform:scaleX(0.834);">3.5</div>
<div class="t" style="top:204.87px;font-size:12.5px;color:#000;left:471.75px;transform-origin:0 0;transform:scaleX(0.834);">4.0</div>
<div class="t" style="top:354.87px;font-size:12.5px;color:#000;left:471.75px;transform-origin:0 0;transform:scaleX(0.834);">4.0</div>
<div class="t" style="top:204.87px;font-size:12.5px;color:#000;left:523.75px;transform-origin:0 0;transform:scaleX(0.834);">4.5</div>
<div class="t" style="top:354.87px;font-size:12.5px;color:#000;left:523.75px;transform-origin:0 0;transform:scaleX(0.834);">4.5</div>
<div class="t" style="top:365.87px;font-size:12.5px;color:#000;left:40.4px;transform-origin:0 0;transform:scaleX(0.898);">PI Errors</div>
<div class="t" style="top:365.87px;font-size:12.5px;color:#000;left:220px;transform-origin:0 0;transform:scaleX(0.912);">PI Failures</div>
<div class="t" style="top:365.87px;font-size:12.5px;color:#000;left:401.5px;transform-origin:0 0;transform:scaleX(0.978);">Jitter</div>
<div class="t" style="top:380.87px;font-size:12.5px;color:#000080;right:568px;transform-origin:100% 0;transform:scaleX(0.863);">89.18</div>
<div class="t" style="top:398.87px;font-size:12.5px;color:#000080;right:568px;transform-origin:100% 0;transform:scaleX(0.863);">650</div>
<div class="t" style="top:416.87px;font-size:12.5px;color:#000080;right:568px;transform-origin:100% 0;transform:scaleX(0.863);">558421</div>
<div class="t" style="top:380.87px;font-size:12.5px;color:#000080;right:385.3px;transform-origin:100% 0;transform:scaleX(0.863);">2.03</div>
<div class="t" style="top:398.87px;font-size:12.5px;color:#000080;right:385.3px;transform-origin:100% 0;transform:scaleX(0.863);">88</div>
<div class="t" style="top:416.87px;font-size:12.5px;color:#000080;right:385.3px;transform-origin:100% 0;transform:scaleX(0.863);">7131</div>
<div class="t" style="top:380.87px;font-size:12.5px;color:#000080;word-spacing:3px;right:204.3px;transform-origin:100% 0;transform:scaleX(0.776);">11.91 %</div>
<div class="t" style="top:398.87px;font-size:12.5px;color:#000080;word-spacing:3px;right:204.3px;transform-origin:100% 0;transform:scaleX(0.739);">17.9 %</div>
<div class="t" style="top:421.87px;font-size:12.5px;color:#000;left:389px;transform-origin:0 0;transform:scaleX(0.885);">PO Failures:</div>
<div class="t" style="top:421.87px;font-size:12.5px;color:#000080;right:205.5px;transform-origin:100% 0;transform:scaleX(0.829);">172</div>
<div class="t" style="top:98.87px;font-size:12.5px;color:#000080;left:616.3px;transform-origin:0 0;transform:scaleX(0.985);">DVD-R</div>
<div class="t" style="top:113.87px;font-size:12.5px;color:#000080;left:616.3px;transform-origin:0 0;transform:scaleX(0.847);">GSC001</div>
<div class="t" style="top:128.87px;font-size:12.5px;color:#000080;left:616.3px;transform-origin:0 0;transform:scaleX(0.900);">1 February 2005</div>
<div class="t" style="top:143.87px;font-size:12.5px;color:#000080;left:616.3px;transform-origin:0 0;transform:scaleX(0.836);">CDS_TEST_B2</div>
<div class="t" style="top:113.87px;font-size:12.5px;color:#000;left:568.7px;transform-origin:0 0;transform:scaleX(0.832);">ID:</div>
<div class="t" style="top:143.87px;font-size:12.5px;color:#000;left:568.7px;transform-origin:0 0;transform:scaleX(0.840);">Label:</div>
<div class="t" style="top:164.87px;font-size:12.5px;color:#0000f0;left:569px;transform-origin:0 0;transform:scaleX(0.952);">Settings</div>
<div class="t" style="top:209.87px;font-size:12.5px;color:#000;word-spacing:3px;left:633.2px;transform-origin:0 0;transform:scaleX(0.858);">0000 MB</div>
<div class="t" style="top:232.87px;font-size:12.5px;color:#000;word-spacing:3px;left:633.2px;transform-origin:0 0;transform:scaleX(0.858);">4488 MB</div>
<div class="t" style="top:253.87px;font-size:12.5px;color:#000;word-spacing:1.5px;left:584.4px;transform-origin:0 0;transform:scaleX(0.901);">Show C1/PIE</div>
<div class="t" style="top:270.87px;font-size:12.5px;color:#000;word-spacing:1.5px;left:584.4px;transform-origin:0 0;transform:scaleX(0.900);">Show C2/PIF</div>
<div class="t" style="top:286.87px;font-size:12.5px;color:#000;word-spacing:1.5px;left:584.4px;transform-origin:0 0;transform:scaleX(0.924);">Show Jitter</div>
<div class="t" style="top:303.87px;font-size:12.5px;color:#000;word-spacing:1.5px;left:584.4px;transform-origin:0 0;transform:scaleX(0.856);">Show Read Speed</div>
<div class="t" style="top:319.87px;font-size:12.5px;color:#a8a8a8;word-spacing:1.5px;left:584.4px;transform-origin:0 0;transform:scaleX(0.864);">Show Write Speed</div>
<div class="t" style="top:348.87px;font-size:12.5px;color:#000080;right:36.1px;transform-origin:100% 0;transform:scaleX(0.992);">2</div>
<div class="t" style="top:380.87px;font-size:12.5px;color:#000080;word-spacing:3px;right:34.8px;transform-origin:100% 0;transform:scaleX(0.772);">100 %</div>
<div class="t" style="top:398.87px;font-size:12.5px;color:#000080;word-spacing:3px;right:35.9px;transform-origin:100% 0;transform:scaleX(0.866);">1993 MB</div>
<div class="t" style="top:417.87px;font-size:12.5px;color:#000080;word-spacing:3px;right:34.5px;transform-origin:100% 0;transform:scaleX(0.829);">48.40 X</div>
<div class="j" style="left:26.6px;top:381.7px;color:#000;">平均:</div>
<div class="j" style="left:208.2px;top:381.7px;color:#000;">平均:</div>
<div class="j" style="left:26.6px;top:399.7px;color:#000;">最大:</div>
<div class="j" style="left:208.2px;top:399.7px;color:#000;">最大:</div>
<div class="j" style="left:26.6px;top:417.7px;color:#000;">合計 :</div>
<div class="j" style="left:208.2px;top:417.7px;color:#000;">合計 :</div>
<div class="j" style="left:389px;top:381.7px;color:#000;">平均:</div>
<div class="j" style="left:389px;top:399.7px;color:#000;">最大:</div>
<div class="j" style="left:583.4px;top:61.2px;color:#000;">開始</div>
<div class="j" style="left:667.2px;top:61.2px;color:#000;">終了<span style="display:inline-block;width:16px"><span class="ks" style="transform:scaleX(0.9)">(<u>X</u>)</span></span></div>
<div class="j" style="left:569.8px;top:85px;color:#0000f0;"><span class="kw" style="width:34px"><span class="ks" style="letter-spacing:-1.6px;transform:scaleX(0.817)">ディスク</span></span>情報</div>
<div class="j" style="left:568.6px;top:101.2px;color:#000;"><span class="kw" style="width:24.5px"><span class="ks" style="letter-spacing:-1.6px;transform:scaleX(0.785)">タイプ</span></span>:</div>
<div class="j" style="left:568.6px;top:130.9px;color:#000;">日付:</div>
<div class="j" style="left:568.6px;top:187.7px;color:#000;">転送速度</div>
<div class="j" style="left:568.6px;top:212.7px;color:#000;">開始</div>
<div class="j" style="left:568.6px;top:235.7px;color:#000;">終了位置</div>
<div class="j" style="left:634.6px;top:188.2px;color:#000;">最大</div>
<div class="j" style="left:568.6px;top:350px;color:#000;">品質<span class="kw" style="width:24.6px"><span class="ks" style="letter-spacing:-1.6px;transform:scaleX(0.788)">スコア</span></span>:</div>
<div class="j" style="left:568.6px;top:382.5px;color:#000;">進行状況:</div>
<div class="j" style="left:568.6px;top:400.5px;color:#000;"><span class="kw" style="width:42.5px"><span class="ks" style="letter-spacing:-1.6px;transform:scaleX(0.817)">ポジション</span></span>:</div>
<div class="j" style="left:568.6px;top:419.1px;color:#000;">速度:</div>
</body></html>
